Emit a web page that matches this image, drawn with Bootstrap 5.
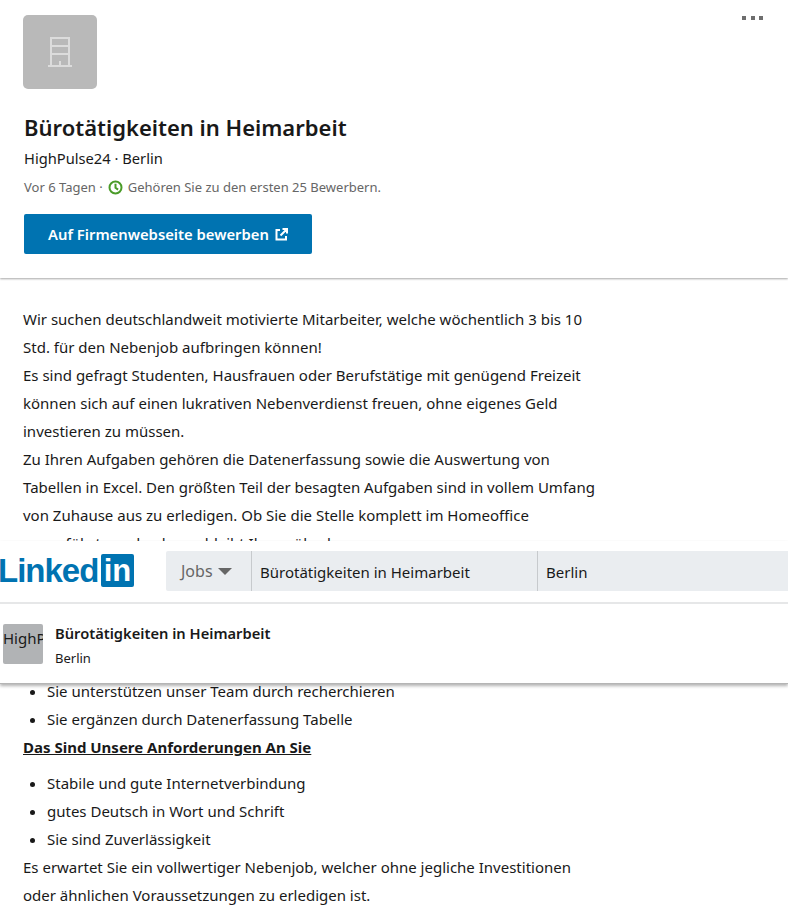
<!DOCTYPE html>
<html lang="de">
<head>
    <meta charset="UTF-8">
    <meta name="viewport" content="width=device-width, initial-scale=1.0">
    <title>Bürotätigkeiten in Heimarbeit</title>
    <link href="https://cdn.jsdelivr.net/npm/bootstrap@5.3.0/dist/css/bootstrap.min.css" rel="stylesheet">
    <style>
        body {
            font-family: "Noto Sans", "Open Sans", sans-serif;
            color: #191919;
            background: #fff;
            font-size: 15px;
            line-height: 28px;
        }
        .job-top {
            height: 278px;
            padding: 15px 24px 0;
            box-shadow: 0 1px 2px rgba(0, 0, 0, .35);
        }
        .more-dots {
            top: 16px;
            right: 25px;
            gap: 4.5px;
        }
        .more-dots i {
            width: 4px;
            height: 4px;
            background: #6e6e6e;
        }
        .logo-tile {
            width: 74px;
            height: 74px;
            margin-left: -1px;
            background: #b9b9b9;
            border-radius: 5px;
        }
        .job-title {
            font-size: 22px;
            font-weight: 600;
            line-height: 30px;
            margin: 23px 0 0;
        }
        .job-company {
            font-size: 14.7px;
            line-height: 24px;
            margin-top: 4px;
        }
        .job-meta {
            font-size: 13px;
            line-height: 20px;
            color: #666;
            margin-top: 7px;
        }
        .clock-icon {
            margin: 0 5px;
        }
        .btn-apply {
            width: 288px;
            height: 40px;
            margin-top: 17px;
            background: #0073b1;
            color: #fff;
            font-size: 14.8px;
            font-weight: 600;
            border-radius: 2px;
            border: 0;
            gap: 6px;
        }
        .btn-apply:hover {
            background: #006097;
            color: #fff;
        }
        .job-text {
            padding: 27px 23px 0;
            width: 622px;
        }
        .job-text p {
            margin: 0;
        }
        .job-text ul {
            margin: 8px 0 0;
            padding-left: 24px;
        }
        .job-text strong {
            font-weight: 700;
            text-decoration: underline;
        }
        .sticky-head {
            top: 541px;
            left: 0;
            right: 0;
            height: 143px;
            box-shadow: 0 2px 3px rgba(0, 0, 0, .3);
            border-bottom: 1px solid #b5b5b5;
        }
        .head-row {
            height: 63px;
            padding-top: 10px;
            border-bottom: 2px solid #e6e7e8;
        }
        .brand-word {
            font-family: "Liberation Sans", Arial, sans-serif;
            font-weight: 700;
            font-size: 33px;
            line-height: 33px;
            color: #0073b1;
            letter-spacing: -1px;
            width: 101px;
            margin-top: 3px;
            text-indent: -2px;
            white-space: nowrap;
        }
        .brand-in {
            font-family: "Liberation Sans", Arial, sans-serif;
            font-weight: 700;
            font-size: 31px;
            line-height: 34px;
            width: 33px;
            height: 33px;
            margin-top: 3px;
            background: #0073b1;
            color: #fff;
            border-radius: 2px;
        }
        .search-bar {
            height: 40px;
            margin-left: 32px;
            background: #eaedf0;
            border-radius: 2px 0 0 2px;
            line-height: 42px;
        }
        .search-jobs {
            width: 86px;
            padding-left: 15px;
            color: #666;
            font-size: 16px;
            border-right: 1px solid #c7cacd;
        }
        .caret-down {
            width: 0;
            height: 0;
            margin-left: 5px;
            border-left: 7px solid transparent;
            border-right: 7px solid transparent;
            border-top: 7px solid #666;
        }
        .search-what {
            width: 286px;
            padding-left: 8px;
            border-right: 1px solid #c7cacd;
        }
        .search-where {
            padding-left: 8px;
        }
        .mini-job {
            padding: 20px 3px 0;
            gap: 12px;
        }
        .mini-logo {
            width: 40px;
            height: 40px;
            background: #b1b3b5;
            border-radius: 2px;
            font-size: 15px;
            line-height: 28px;
            white-space: nowrap;
        }
        .mini-title {
            font-size: 14.7px;
            font-weight: 600;
            line-height: 20px;
            margin-top: -1px;
        }
        .mini-place {
            font-size: 13px;
            line-height: 20px;
            margin-top: 5px;
        }
    </style>
</head>
<body>
    <div class="job-top bg-white position-relative">
        <div class="more-dots position-absolute d-flex"><i></i><i></i><i></i></div>
        <div class="logo-tile d-flex align-items-center justify-content-center">
            <svg width="26" height="32" viewBox="0 0 26 32" fill="none" stroke="#dcdcdc" stroke-width="2">
                <path d="M4 30V2h18v28M1 30h24M4 10h18M4 18h18M13 30v-5"/>
            </svg>
        </div>
        <h1 class="job-title">Bürotätigkeiten in Heimarbeit</h1>
        <div class="job-company">HighPulse24 · Berlin</div>
        <div class="job-meta d-flex align-items-center">
            Vor 6 Tagen ·
            <svg class="clock-icon" width="15" height="15" viewBox="0 0 15 15" fill="none" stroke="#4a9b28" stroke-width="2">
                <circle cx="7.5" cy="7.5" r="6"/>
                <path d="M7.5 3.8v4l2.6 1.8"/>
            </svg>
            Gehören Sie zu den ersten 25 Bewerbern.
        </div>
        <a href="#" class="btn btn-apply d-flex align-items-center justify-content-center">
            Auf Firmenwebseite bewerben
            <svg width="13" height="13" viewBox="0 0 13 13" fill="none" stroke="#fff" stroke-width="2">
                <path d="M5 2H1.500v9.500h9.500V8M7.500 1H12v4.500M12 1L5.500 7.500"/>
            </svg>
        </a>
    </div>

    <div class="job-text">
        <p>Wir suchen deutschlandweit motivierte Mitarbeiter, welche wöchentlich 3 bis 10 Std. für den Nebenjob aufbringen können!</p>
        <p>Es sind gefragt Studenten, Hausfrauen oder Berufstätige mit genügend Freizeit können sich auf einen lukrativen Nebenverdienst freuen, ohne eigenes Geld investieren zu müssen.</p>
        <p>Zu Ihren Aufgaben gehören die Datenerfassung sowie die Auswertung von Tabellen in Excel. Den größten Teil der besagten Aufgaben sind in vollem Umfang von Zuhause aus zu erledigen. Ob Sie die Stelle komplett im Homeoffice ausgeführt werden kann, bleibt Ihnen überlassen.</p>
        <p><strong>Das Erwartet Sie Bei Uns</strong></p>
        <ul>
            <li>Sie arbeiten flexibel von zu Hause</li>
            <li>Sie erhalten eine faire Vergütung</li>
            <li>Sie werden sorgfältig eingearbeitet</li>
            <li>Sie unterstützen unser Team durch recherchieren</li>
            <li>Sie ergänzen durch Datenerfassung Tabelle</li>
        </ul>
        <p><strong>Das Sind Unsere Anforderungen An Sie</strong></p>
        <ul>
            <li>Stabile und gute Internetverbindung</li>
            <li>gutes Deutsch in Wort und Schrift</li>
            <li>Sie sind Zuverlässigkeit</li>
        </ul>
        <p>Es erwartet Sie ein vollwertiger Nebenjob, welcher ohne jegliche Investitionen oder ähnlichen Voraussetzungen zu erledigen ist.</p>
    </div>

    <div class="sticky-head position-absolute bg-white">
        <div class="head-row d-flex">
            <div class="brand-word">Linked</div>
            <div class="brand-in text-center">in</div>
            <div class="search-bar d-flex flex-grow-1">
                <div class="search-jobs d-flex align-items-center">Jobs<span class="caret-down"></span></div>
                <div class="search-what">Bürotätigkeiten in Heimarbeit</div>
                <div class="search-where">Berlin</div>
            </div>
        </div>
        <div class="mini-job d-flex">
            <div class="mini-logo overflow-hidden">HighPulse24</div>
            <div>
                <div class="mini-title">Bürotätigkeiten in Heimarbeit</div>
                <div class="mini-place">Berlin</div>
            </div>
        </div>
    </div>

    <script src="https://cdn.jsdelivr.net/npm/bootstrap@5.3.0/dist/js/bootstrap.bundle.min.js"></script>
</body>
</html>
